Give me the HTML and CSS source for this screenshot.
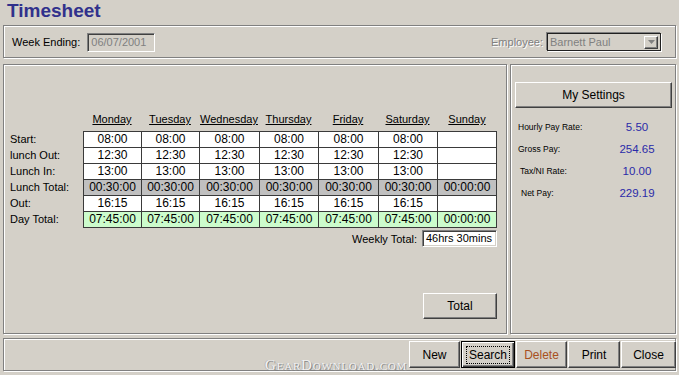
FILE: index.html
```html
<!DOCTYPE html>
<html>
<head>
<meta charset="utf-8">
<link rel="stylesheet" href="styles.css">
</head>
<body>
<div class="window">
  <h1 class="title">Timesheet</h1>

  <div class="panel top">
    <span class="lbl">Week Ending:</span>
    <div class="field disabled week">06/07/2001</div>
    <div class="spacer"></div>
    <span class="lbl dim">Employee:</span>
    <div class="combo">
      <span class="combo-text">Barnett Paul</span>
      <span class="drop"><svg width="7" height="4" viewBox="0 0 7 4"><path d="M0 0h7L3.5 4z" fill="#808080"/></svg></span>
    </div>
  </div>

  <div class="main">
    <div class="panel left">
      <div class="sheet">
        <div class="grid">
          <div></div>
          <div class="day">Monday</div>
          <div class="day">Tuesday</div>
          <div class="day">Wednesday</div>
          <div class="day">Thursday</div>
          <div class="day">Friday</div>
          <div class="day">Saturday</div>
          <div class="day">Sunday</div>

          <div class="rl">Start:</div>
          <div class="c">08:00</div><div class="c">08:00</div><div class="c">08:00</div><div class="c">08:00</div><div class="c">08:00</div><div class="c">08:00</div><div class="c"></div>

          <div class="rl">lunch Out:</div>
          <div class="c">12:30</div><div class="c">12:30</div><div class="c">12:30</div><div class="c">12:30</div><div class="c">12:30</div><div class="c">12:30</div><div class="c"></div>

          <div class="rl">Lunch In:</div>
          <div class="c">13:00</div><div class="c">13:00</div><div class="c">13:00</div><div class="c">13:00</div><div class="c">13:00</div><div class="c">13:00</div><div class="c"></div>

          <div class="rl">Lunch Total:</div>
          <div class="c grey">00:30:00</div><div class="c grey">00:30:00</div><div class="c grey">00:30:00</div><div class="c grey">00:30:00</div><div class="c grey">00:30:00</div><div class="c grey">00:30:00</div><div class="c grey">00:00:00</div>

          <div class="rl">Out:</div>
          <div class="c">16:15</div><div class="c">16:15</div><div class="c">16:15</div><div class="c">16:15</div><div class="c">16:15</div><div class="c">16:15</div><div class="c"></div>

          <div class="rl">Day Total:</div>
          <div class="c green">07:45:00</div><div class="c green">07:45:00</div><div class="c green">07:45:00</div><div class="c green">07:45:00</div><div class="c green">07:45:00</div><div class="c green">07:45:00</div><div class="c green">00:00:00</div>
        </div>

        <div class="weekly">
          <span class="lbl">Weekly Total:</span>
          <div class="field white wt">46hrs 30mins</div>
        </div>

        <div class="total-row">
          <button class="btn total">Total</button>
        </div>
      </div>
    </div>

    <div class="panel right">
      <button class="btn settings">My Settings</button>
      <div class="stats">
        <div class="stat"><span class="sl">Hourly Pay Rate:</span><span class="sv">5.50</span></div>
        <div class="stat"><span class="sl">Gross Pay:</span><span class="sv">254.65</span></div>
        <div class="stat"><span class="sl in2">Tax/NI Rate:</span><span class="sv">10.00</span></div>
        <div class="stat"><span class="sl in3">Net Pay:</span><span class="sv">229.19</span></div>
      </div>
    </div>
  </div>

  <div class="panel bottom">
    <div class="actions">
      <button class="btn b-new">New</button>
      <button class="btn b-search default"><span class="focus">Search</span></button>
      <button class="btn b-delete">Delete</button>
      <button class="btn b-print">Print</button>
      <button class="btn b-close">Close</button>
    </div>
  </div>

  <div class="watermark">GearDownload.com</div>
</div>
</body>
</html>
```

FILE: styles.css
```css
* { box-sizing: border-box; }

body {
  margin: 0;
  width: 679px;
  height: 375px;
  overflow: hidden;
  background: #d4d0c8;
  font-family: "Liberation Sans", Arial, sans-serif;
  font-size: 11px;
  color: #000;
}

.window {
  position: relative;
  padding: 0 3px;
  height: 375px;
}

.title {
  margin: 0;
  height: 25px;
  padding-left: 4px;
  font-size: 19px;
  line-height: 22px;
  font-weight: bold;
  color: #31318c;
}

.panel {
  border: 1px solid #808080;
  box-shadow: 1px 1px 0 #fff, inset 1px 1px 0 #fff;
}

/* top panel */
.top {
  width: 673px;
  height: 33px;
  display: flex;
  align-items: center;
  padding: 0 14px 0 8px;
}

.lbl { white-space: nowrap; }

.dim {
  color: #808080;
  text-shadow: 1px 1px 0 #fff;
  margin-right: 4px;
}

.spacer { flex: 1; }

.field {
  border: 1px solid;
  border-color: #808080 #fff #fff #808080;
  box-shadow: inset 1px 1px 0 #404040, inset -1px -1px 0 #d4d0c8;
  padding-left: 3px;
  white-space: nowrap;
}

.disabled { background: #d4d0c8; color: #808080; }
.white { background: #fff; color: #000; }

.week {
  width: 68px;
  height: 19px;
  line-height: 17px;
  margin-left: 7px;
  margin-top: 1px;
}

.combo {
  width: 114px;
  height: 18px;
  border: 1px solid #202020;
  box-shadow: -1px -1px 0 #808080, 1px 1px 0 #fff;
  display: flex;
  align-items: center;
  padding: 0 2px 0 2px;
  color: #808080;
  margin-top: 1px;
}

.combo-text { flex: 1; line-height: 16px; }

.drop {
  width: 14px;
  height: 13px;
  display: flex;
  align-items: center;
  justify-content: center;
  background: #d4d0c8;
  border: 1px solid;
  border-color: #fff #404040 #404040 #fff;
  box-shadow: inset -1px -1px 0 #808080;
}

/* main */
.main {
  display: flex;
  gap: 3px;
  margin-top: 6px;
  height: 270px;
}

.left {
  width: 504px;
  padding-left: 6px;
}

.sheet {
  width: 487px;
  margin-top: 46px;
}

.grid {
  display: grid;
  grid-template-columns: 73px 58px 58px 60px 59px 60px 59px 60px;
  grid-template-rows: 20px 16px 16px 16px 16px 16px 17px;
}

.day {
  align-self: end;
  text-align: center;
  text-decoration: underline;
  line-height: 13px;
  padding-bottom: 5px;
  white-space: nowrap;
}

.rl {
  line-height: 17px;
  white-space: nowrap;
}

.c {
  border-left: 1px solid #3a3a3a;
  border-top: 1px solid #3a3a3a;
  background: #fff;
  text-align: center;
  font-size: 12px;
  line-height: 15px;
}

.grid .c:nth-child(8n) { border-right: 1px solid #3a3a3a; }

.c.grey { background: #c0c0c0; }
.c.green { background: #ccfccc; border-bottom: 1px solid #3a3a3a; }

.weekly {
  display: flex;
  justify-content: flex-end;
  align-items: center;
  gap: 5px;
  margin-top: 2px;
  height: 17px;
}

.wt {
  width: 75px;
  height: 17px;
  line-height: 15px;
  padding-left: 3px;
}

.total-row {
  display: flex;
  justify-content: flex-end;
  margin-top: 46px;
}

/* buttons */
.btn {
  font-family: "Liberation Sans", Arial, sans-serif;
  font-size: 12px;
  color: #000;
  background: #d4d0c8;
  border: 1px solid;
  border-color: #fff #404040 #404040 #fff;
  box-shadow: inset -1px -1px 0 #808080;
  padding: 0;
  margin: 0;
  cursor: default;
}

.total { width: 74px; height: 26px; }

.right {
  width: 166px;
  padding-left: 4px;
}

.settings {
  display: block;
  width: 157px;
  height: 26px;
  margin-top: 17px;
}

.stats { margin-top: 8px; }

.stat {
  display: grid;
  grid-template-columns: 102px 40px;
  height: 22px;
  align-items: center;
}

.sl {
  padding-left: 3px;
  font-size: 8.5px;
  white-space: nowrap;
}

.sl.in2 { padding-left: 5px; }
.sl.in3 { padding-left: 6px; }

.sv {
  text-align: center;
  font-size: 11.5px;
  color: #2a2aa8;
}

/* bottom */
.bottom {
  width: 673px;
  height: 33px;
  margin-top: 4px;
  padding-top: 2px;
}

.actions {
  display: flex;
  justify-content: flex-end;
  gap: 1px;
  margin-right: -1px;
}

.actions .btn { height: 27px; }

.b-new { width: 51px; }
.b-search { width: 54px; }
.b-delete { width: 51px; color: #a8501e; }
.b-print { width: 52px; }
.b-close { width: 55px; }

.default {
  border: 1px solid #000;
  box-shadow: inset 1px 1px 0 #fff, inset -1px -1px 0 #404040, inset -2px -2px 0 #808080;
}

.focus {
  outline: 1px dotted #000;
  outline-offset: 1px;
  padding: 0 1px;
}

.watermark {
  position: absolute;
  left: 265px;
  top: 357px;
  font-family: "Liberation Serif", serif;
  font-variant: small-caps;
  font-size: 15px;
  letter-spacing: 0.8px;
  color: #f2f2f2;
  text-shadow: 1px 1px 0 #8a8a8a, -1px 0 0 #b8b8b8;
}
```
